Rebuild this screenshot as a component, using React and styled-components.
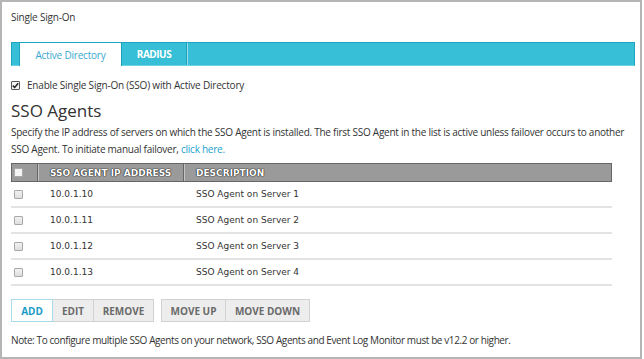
import React from 'react'
import styled, { createGlobalStyle } from 'styled-components'

const GlobalStyle = createGlobalStyle`
  body {
    margin: 0;
    background: #fff;
    font-family: "Open Sans", "Liberation Sans", sans-serif;
    color: #444;
  }
`

const agents = [
  { ip: '10.0.1.10', desc: 'SSO Agent on Server 1' },
  { ip: '10.0.1.11', desc: 'SSO Agent on Server 2' },
  { ip: '10.0.1.12', desc: 'SSO Agent on Server 3' },
  { ip: '10.0.1.13', desc: 'SSO Agent on Server 4' },
]

const Frame = styled.div`
  box-sizing: border-box;
  width: 642px;
  height: 359px;
  border: 2px solid #b5b5b5;
  padding: 8px 5px 0 9px;
`

const Title = styled.div`
  font-size: 10px;
  line-height: 15px;
  letter-spacing: -0.2px;
  color: #333;
`

const TabBar = styled.div`
  box-sizing: border-box;
  display: flex;
  height: 24px;
  margin-top: 17px;
  padding-left: 7px;
  background: #37bfd7;
  border: 1px solid #1ca6c3;
  border-bottom-color: #6fd3e6;
`

const Tab = styled.div`
  box-sizing: border-box;
  display: flex;
  align-items: center;
  justify-content: center;
  width: ${p => p.$w}px;
  height: ${p => (p.$active ? 23 : 22)}px;
  font-size: 10px;
  font-weight: ${p => (p.$active ? 400 : 700)};
  letter-spacing: ${p => (p.$active ? '-0.2px' : '-0.5px')};
  color: ${p => (p.$active ? '#3aa8cf' : '#fff')};
  background: ${p => (p.$active ? '#fff' : 'transparent')};
  border-left: ${p => (p.$active ? '1px solid #1ca6c3' : 'none')};
  border-right: 1px solid #1c9fba;
  box-shadow: ${p => (p.$active ? 'none' : '1px 0 0 #9fe0ec')};
`

const CheckRow = styled.label`
  display: flex;
  align-items: center;
  gap: 7px;
  margin-top: 12px;
  font-size: 10px;
  line-height: 15px;
  letter-spacing: -0.2px;
  color: #333;
`

const Box = styled.span`
  box-sizing: border-box;
  display: inline-flex;
  align-items: center;
  justify-content: center;
  width: 9px;
  height: 9px;
  flex: none;
  border: 1px solid ${p => (p.$dark ? '#555' : '#a8a8a8')};
  border-radius: 1px;
  background: ${p => (p.$light ? '#f4f4f4' : 'linear-gradient(#f2f2f2, #dedede)')};
`

const Heading = styled.h2`
  margin: 7px 0 0;
  font-size: 17px;
  font-weight: 400;
  line-height: 22px;
  color: #333;
`

const Text = styled.p`
  margin: 2px 0 0;
  font-size: 10px;
  line-height: 17px;
  letter-spacing: -0.25px;
  color: #333;
`

const Link = styled.a`
  color: #229fcf;
  text-decoration: none;
`

const Table = styled.div`
  width: 601px;
  margin-top: 5px;
  font-family: "DejaVu Sans", Verdana, sans-serif;
`

const HeadRow = styled.div`
  box-sizing: border-box;
  display: grid;
  grid-template-columns: 25px 146px 1fr;
  height: 19px;
  background: #9a9a9a;
  border: 1px solid #666;
`

const HeadCell = styled.div`
  display: flex;
  align-items: center;
  padding-left: ${p => p.$pad}px;
  font-size: 9px;
  font-weight: 700;
  color: #fff;
  text-shadow: 0 0 1px #222, 0 0 1px #222, 0 0 1px #222;
  border-left: ${p => (p.$first ? 'none' : '1px solid #666')};
  box-shadow: ${p => (p.$first ? 'none' : 'inset 1px 0 0 #c4c4c4')};
`

const Row = styled.div`
  display: grid;
  grid-template-columns: 25px 146px 1fr;
  height: 24px;
  border-bottom: 2px solid #e3e3e3;
  font-size: 9px;
  color: #333;
`

const Cell = styled.div`
  display: flex;
  align-items: center;
  padding-left: ${p => p.$pad}px;
`

const Buttons = styled.div`
  display: flex;
  gap: 7px;
  margin-top: 13px;
`

const Group = styled.div`
  display: flex;
`

const Button = styled.button`
  box-sizing: border-box;
  height: 23px;
  width: ${p => p.$w}px;
  padding: 0;
  font-family: "Open Sans", "Liberation Sans", sans-serif;
  font-size: 10px;
  font-weight: 700;
  color: ${p => (p.$primary ? '#1a9cc8' : '#6a6a6a')};
  background: ${p => (p.$primary ? '#fff' : '#ededed')};
  border: 1px solid ${p => (p.$primary ? '#a6dcea' : '#d2d2d2')};
  margin-left: ${p => (p.$first ? 0 : -1)}px;
  position: relative;
  z-index: ${p => (p.$primary ? 1 : 0)};
`

const Note = styled.p`
  margin: 11px 0 0;
  font-size: 10px;
  line-height: 15px;
  letter-spacing: -0.4px;
  color: #333;
`

function Check() {
  return (
    <Box $dark $light>
      <svg width="7" height="7" viewBox="0 0 7 7">
        <path d="M0.8 3.6 L2.7 5.5 L6.2 1.2" fill="none" stroke="#222" strokeWidth="1.5" />
      </svg>
    </Box>
  )
}

export default function App() {
  return (
    <>
      <GlobalStyle />
      <Frame>
        <Title>Single Sign-On</Title>
        <TabBar>
          <Tab $active $w={103}>Active Directory</Tab>
          <Tab $w={65}>RADIUS</Tab>
        </TabBar>
        <CheckRow>
          <Check />
          Enable Single Sign-On (SSO) with Active Directory
        </CheckRow>
        <Heading>SSO Agents</Heading>
        <Text>
          Specify the IP address of servers on which the SSO Agent is installed. The first SSO Agent in the list is
          active unless failover occurs to another SSO Agent. To initiate manual failover, <Link href="#">click here.</Link>
        </Text>
        <Table>
          <HeadRow>
            <HeadCell $first $pad={2}><Box $light /></HeadCell>
            <HeadCell $pad={12}>SSO AGENT IP ADDRESS</HeadCell>
            <HeadCell $pad={12}>DESCRIPTION</HeadCell>
          </HeadRow>
          {agents.map(a => (
            <Row key={a.ip}>
              <Cell $pad={3}><Box /></Cell>
              <Cell $pad={14}>{a.ip}</Cell>
              <Cell $pad={14}>{a.desc}</Cell>
            </Row>
          ))}
        </Table>
        <Buttons>
          <Group>
            <Button $primary $first $w={42}>ADD</Button>
            <Button $w={42}>EDIT</Button>
            <Button $w={61}>REMOVE</Button>
          </Group>
          <Group>
            <Button $first $w={65}>MOVE UP</Button>
            <Button $w={85}>MOVE DOWN</Button>
          </Group>
        </Buttons>
        <Note>
          Note: To configure multiple SSO Agents on your network, SSO Agents and Event Log Monitor must be v12.2 or higher.
        </Note>
      </Frame>
    </>
  )
}
